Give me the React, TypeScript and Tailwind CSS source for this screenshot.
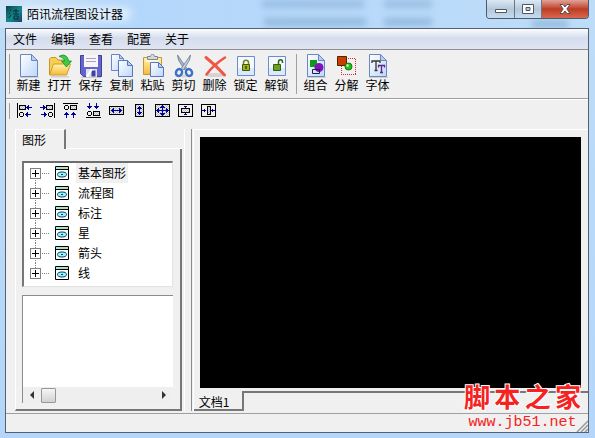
import type { ReactNode } from "react";

const menus = ["文件", "编辑", "查看", "配置", "关于"];
const shapes = ["基本图形", "流程图", "标注", "星", "箭头", "线"];

function Icon({ children }: { children?: ReactNode }) {
  return (
    <svg viewBox="0 0 24 24" className="h-6 w-6" aria-hidden="true">
      {children}
    </svg>
  );
}

function Defs() {
  return (
    <svg className="absolute h-0 w-0" aria-hidden="true">
      <defs>
        <linearGradient id="paper" x1="0" y1="0" x2="1" y2="1">
          <stop offset="0" stopColor="#ffffff" />
          <stop offset="1" stopColor="#bdd6fb" />
        </linearGradient>
        <linearGradient id="folder" x1="0" y1="0" x2="0" y2="1">
          <stop offset="0" stopColor="#fff6a8" />
          <stop offset="1" stopColor="#f5b93c" />
        </linearGradient>
        <linearGradient id="logo" x1="0" y1="0" x2="1" y2="1">
          <stop offset="0" stopColor="#0b3f4c" />
          <stop offset="0.55" stopColor="#138a8c" />
          <stop offset="1" stopColor="#1c3c66" />
        </linearGradient>
        <pattern id="hatch" width="2" height="2" patternUnits="userSpaceOnUse">
          <path d="M0 0h2v2H0z" fill="#f0f0f0" />
          <path d="M0 0h1v1H0zM1 1h1v1H1z" fill="#bdbdbd" />
        </pattern>
      </defs>
    </svg>
  );
}

const PAGE = "M3.5 .5h11l6 6v16h-17z";
const FOLD = "M14.5 .5v6h6z";

const Page = () => (
  <>
    <path d="M3 23.3h19" stroke="#c9c9c9" />
    <path d={PAGE} fill="url(#paper)" stroke="#6a87c4" />
    <path d={FOLD} fill="#b9cdf0" stroke="#6a87c4" />
  </>
);

const NewIcon = () => (
  <Icon>
    <Page />
  </Icon>
);

const OpenIcon = () => (
  <Icon>
    <path d="M3 22.8h18" stroke="#c4c4c4" />
    <path d="M1.500 20.500V5L3 3.500h5l2 2.500h8v5" fill="#f7cf55" stroke="#c9922a" />
    <path d="M1.500 21l4-11h17l-4 11z" fill="url(#folder)" stroke="#d39a2c" />
    <path d="M11 2.500c4-3 9-1 9.500 4.500h3l-5 6-5-6h3c0-2.500-2.500-4-5.500-4.500z" fill="#43c943" stroke="#168a27" strokeWidth=".8" />
  </Icon>
);

const SaveIcon = () => (
  <Icon>
    <path d="M2 23.3h20" stroke="#c4c4c4" />
    <path d="M1.500 1.500h21v21H4.500l-3-3z" fill="#6464cc" stroke="#3d3f9d" />
    <path d="M5 1h14v12H5z" fill="#f7f4fa" />
    <path d="M7 4.500h10M7 7.500h10" stroke="#a9a3b5" />
    <path d="M7 15h11v8H7z" fill="#dfe2ee" />
    <path d="M12.500 16.500h4v6h-4z" fill="#3f41a5" />
    <path d="M7 22l5-7h2l-5 8z" fill="#fff" />
  </Icon>
);

const CopyIcon = () => (
  <Icon>
    <path d="M1.500 .5h8l4 4v12h-12z" fill="url(#paper)" stroke="#6a87c4" />
    <path d="M9.500 .5v4h4z" fill="#b9cdf0" stroke="#6a87c4" />
    <path d="M8.500 6.500h9l5 5v11h-14z" fill="url(#paper)" stroke="#5578c0" />
    <path d="M17.500 6.500v5h5z" fill="#b9cdf0" stroke="#5578c0" />
  </Icon>
);

const PasteIcon = () => (
  <Icon>
    <path d="M2.500 3.500h18v17h-18z" fill="url(#folder)" stroke="#c59537" />
    <path d="M5 5.500h13V8H5z" fill="#fdf8dd" />
    <path d="M6.500 5.500v-3h3c0-3 4-3 4 0h3v3z" fill="#d5d9df" stroke="#7c8796" />
    <path d="M9.500 8.500h8l5 5v9h-13z" fill="url(#paper)" stroke="#5578c0" />
    <path d="M17.500 8.500v5h5z" fill="#b9cdf0" stroke="#5578c0" />
  </Icon>
);

const CutIcon = () => (
  <Icon>
    <ellipse cx="12" cy="22" rx="9" ry="1.500" fill="#d6d6d6" />
    <path d="M5.500 1l1 5 6 10 2-2z" fill="#a9b7ca" stroke="#65778f" strokeWidth=".8" />
    <path d="M18.500 1l-1 5-6 10-2-2z" fill="#c5d0df" stroke="#65778f" strokeWidth=".8" />
    <ellipse cx="7" cy="18.500" rx="3" ry="3.500" fill="none" stroke="#3b70c4" strokeWidth="2.400" transform="rotate(25 7 18.500)" />
    <ellipse cx="17" cy="18.500" rx="3" ry="3.500" fill="none" stroke="#3b70c4" strokeWidth="2.400" transform="rotate(-25 17 18.500)" />
  </Icon>
);

const DeleteIcon = () => (
  <Icon>
    <ellipse cx="12" cy="21" rx="10" ry="2" fill="#d6d2d2" />
    <path d="M3 3.500c5 4 12 10 18.500 17.500" stroke="#ee5646" strokeWidth="3" strokeLinecap="round" fill="none" />
    <path d="M22 3.500C15 8 8 14 3.500 20.500" stroke="#ee5646" strokeWidth="2.600" strokeLinecap="round" fill="none" />
  </Icon>
);

const LockIcon = ({ open = false }: { open?: boolean }) => (
  <Icon>
    <path d="M3.500 2.500h17v19h-17z" fill="#f5f9ff" stroke="#6a8cd0" />
    <path d="M4 14h16v7H4z" fill="#dce9fb" />
    <path
      d={open ? "M13.500 10V8c0-3 4-3 4 0v1" : "M9.500 10V8.500c0-3 5-3 5 0V10"}
      fill="none"
      stroke={open ? "#2f6b1b" : "#72851c"}
      strokeWidth="1.500"
    />
    <path d="M8.500 10.500h7v6h-7z" fill={open ? "#63a51d" : "#a2b617"} stroke="#405910" />
    {!open && <path d="M12 12v3" stroke="#334400" strokeWidth="1.500" />}
  </Icon>
);

const GroupIcon = () => (
  <Icon>
    <Page />
    <path d="M6 6h7v7H6z" fill="#0c9a17" />
    <circle cx="15" cy="13.500" r="4.500" fill="#8213bb" />
    <path d="M8.500 15.500h7v4h-7z" fill="none" stroke="#17224b" />
  </Icon>
);

const SplitIcon = () => (
  <Icon>
    <path d="M6.500 4.500h14v16h-14z" fill="none" stroke="#d02c2c" strokeDasharray="1 1" shapeRendering="crispEdges" />
    <path d="M2.500 2.500h9v9h-9z" fill="#c64100" stroke="#5d1d00" />
    <circle cx="13.500" cy="12.500" r="3.500" fill="#26c11c" stroke="#107710" />
    <circle cx="12.500" cy="11.500" r="1.200" fill="#c5ffb5" />
  </Icon>
);

const FontIcon = () => (
  <Icon>
    <Page />
    <path d="M6 9V7h8v2M10 7v9M8.500 16.500h3" stroke="#3a352f" strokeWidth="1.300" fill="none" />
    <path d="M12.500 13.500v-2h6v2M15.500 12v6M14 18.500h3" stroke="#5a2684" strokeWidth="1.300" fill="none" />
  </Icon>
);

const tools: { label: string; icon: ReactNode }[] = [
  { label: "新建", icon: <NewIcon /> },
  { label: "打开", icon: <OpenIcon /> },
  { label: "保存", icon: <SaveIcon /> },
  { label: "复制", icon: <CopyIcon /> },
  { label: "粘贴", icon: <PasteIcon /> },
  { label: "剪切", icon: <CutIcon /> },
  { label: "删除", icon: <DeleteIcon /> },
  { label: "锁定", icon: <LockIcon /> },
  { label: "解锁", icon: <LockIcon open /> },
];

const groupTools: { label: string; icon: ReactNode }[] = [
  { label: "组合", icon: <GroupIcon /> },
  { label: "分解", icon: <SplitIcon /> },
  { label: "字体", icon: <FontIcon /> },
];

const ink = { fill: "none", stroke: "#000" };
const box = { fill: "url(#hatch)", stroke: "#000" };
const blue = { fill: "#00009c" };
const LEFT = "M0 0h1v-1h1v-1h1v2h3v1H3v2H2V2H1V1H0z";
const RIGHT = "M6 0H5v-1H4v-1H3v2H0v1h3v2h1V2h1V1h1z";
const UP = "M0 0v-1h-1v-1h-1v-1H-3v1H-4v1H-5v1h2v3h1V0z";

const alignTools: { label: string; art: ReactNode }[] = [
  {
    label: "左对齐",
    art: (
      <>
        <path d="M.5 0v15" {...ink} />
        <path d="M2.500 2.500h6v4h-6z" {...box} />
        <circle cx="4.500" cy="11.500" r="2" {...ink} />
        <path d={LEFT} transform="translate(9 4)" {...blue} />
        <path d={LEFT} transform="translate(8 11)" {...blue} />
      </>
    ),
  },
  {
    label: "右对齐",
    art: (
      <>
        <path d="M14.500 0v15" {...ink} />
        <path d="M6.500 2.500h6v4h-6z" {...box} />
        <circle cx="10.500" cy="11.500" r="2" {...ink} />
        <path d={RIGHT} transform="translate(0 4)" {...blue} />
        <path d={RIGHT} transform="translate(1 11)" {...blue} />
      </>
    ),
  },
  {
    label: "顶端对齐",
    art: (
      <>
        <path d="M0 .5h15" {...ink} />
        <path d="M7.500 2.500h6v4h-6z" {...box} />
        <circle cx="3.500" cy="4.500" r="2" {...ink} />
        <path d={UP} transform="translate(6 12)" {...blue} />
        <path d={UP} transform="translate(13 12)" {...blue} />
      </>
    ),
  },
  {
    label: "底端对齐",
    art: (
      <>
        <path d="M0 14.500h15" {...ink} />
        <path d="M7.500 8.500h6v4h-6z" {...box} />
        <circle cx="3.500" cy="10.500" r="2" {...ink} />
        <path d={UP} transform="translate(6 3) scale(1 -1)" {...blue} />
        <path d={UP} transform="translate(13 3) scale(1 -1)" {...blue} />
      </>
    ),
  },
  {
    label: "等宽",
    art: (
      <>
        <path d="M.5 3.500h14v8H.5z" {...box} />
        <path d={LEFT} transform="translate(2 7)" {...blue} />
        <path d={RIGHT} transform="translate(7 7)" {...blue} />
      </>
    ),
  },
  {
    label: "等高",
    art: (
      <>
        <path d="M3.500 1.500h8v12h-8z" {...box} />
        <path d="M7 3h1v1h1v1h1v1H8v3h2v1H9v1H8v1H7v-1H6v-1H5V9h2V6H5V5h1V4h1z" {...blue} />
      </>
    ),
  },
  {
    label: "等大小",
    art: (
      <>
        <path d="M.5 1.500h14v12H.5z" {...box} />
        <path d="M7 2h1v1h1v1h1v1H8v2h3V5h1v1h1v1h1v1h-1v1h-1v1h-1V8H8v2h2v1H9v1H8v1H7v-1H6v-1H5v-1h2V8H4v2H3V9H2V8H1V7h1V6h1V5h1v2h3V5H5V4h1V3h1z" {...blue} />
      </>
    ),
  },
  {
    label: "垂直居中",
    art: (
      <>
        <path d="M.5 1.500h14v12H.5z" {...ink} />
        <path d="M3.500 5.500h8v4h-8z" {...box} />
        <path d="M6 3h3v1H8v1H7V4H6zM7 10h1v1h1v1H6v-1h1z" {...blue} />
      </>
    ),
  },
  {
    label: "水平居中",
    art: (
      <>
        <path d="M.5 1.500h14v12H.5z" {...ink} />
        <path d="M6.500 3.500h3v8h-3z" {...box} />
        <path d="M1 7h2V6h1v1h1v1H4v1H3V8H1zM14 7h-2V6h-1v1h-1v1h1v1h1V8h2z" {...blue} />
      </>
    ),
  },
];

function ToolButton({ label, icon }: { label: string; icon: ReactNode }) {
  return (
    <button className="flex w-[31px] flex-col items-center whitespace-nowrap">
      {icon}
      <span className="leading-[14px]">{label}</span>
    </button>
  );
}

function TitleBar() {
  return (
    <header className="relative flex h-7 shrink-0 items-start justify-between overflow-hidden bg-gradient-to-r from-[#cfe3f7] via-[#b3d7fb] via-20% to-[#bddcf8]">
      <div className="absolute top-0 left-[262px] h-2 w-[102px] bg-[#7da6cd]/50 blur-[3px]" />
      <div className="absolute top-[18px] left-[264px] h-2 w-[102px] bg-[#7da6cd]/60 blur-[3px]" />
      <div className="absolute top-0 left-[384px] h-2 w-12 bg-[#7da6cd]/50 blur-[3px]" />
      <div className="absolute top-[18px] left-[384px] h-2 w-12 bg-[#7da6cd]/60 blur-[3px]" />
      <div className="absolute top-[20px] left-[532px] h-2 w-9 bg-[#7da6cd]/60 blur-[3px]" />
      <div className="absolute top-2 left-[20px] h-3 w-[110px] bg-white/70 blur-[5px]" />
      <div className="relative flex h-7 items-center gap-[5px] pl-[6px]">
        <svg viewBox="0 0 16 16" className="h-4 w-4" aria-hidden="true">
          <path d="M0 0h16v16H0z" fill="url(#logo)" />
          <path d="M4 4l1 1M3 7l1 1M3 12l2-3M7 5h6M10 3v5M7 8h6M8 10h4v3H8z" stroke="#062c36" fill="none" />
        </svg>
        <h1 className="text-xs leading-4">陌讯流程图设计器</h1>
      </div>
      <div className="relative mr-[6px] flex h-[19px] overflow-hidden rounded-b-[4px] border border-t-0 border-[#4b5b6c]">
        <button aria-label="最小化" className="flex w-7 items-center justify-center border-r border-[#66788c] bg-gradient-to-b from-[#dce9f5] via-[#b5c8da] via-50% to-[#c5dbef]">
          <svg viewBox="0 0 12 12" className="h-3 w-3">
            <path d="M.5 6.500h11v3H.5z" fill="#fff" stroke="#505865" />
          </svg>
        </button>
        <button aria-label="最大化" className="flex w-[27px] items-center justify-center border-r border-[#66788c] bg-gradient-to-b from-[#dce9f5] via-[#b5c8da] via-50% to-[#c5dbef]">
          <svg viewBox="0 0 12 12" className="h-3 w-3">
            <path d="M.5 1.500h11v9H.5zM4 4.500h4v3H4z" fill="#fff" stroke="#505865" fillRule="evenodd" />
          </svg>
        </button>
        <button aria-label="关闭" className="flex w-[46px] items-center justify-center bg-gradient-to-b from-[#e0a297] via-[#bd3b24] via-50% to-[#d8684d]">
          <svg viewBox="0 0 12 12" className="h-3 w-3">
            <path d="M1 1.500h3l2 2.500 2-2.500h3L7.800 6l3.200 4.500H8L6 8l-2 2.500H1L4.200 6z" fill="#fff" stroke="#55434b" strokeWidth=".9" />
          </svg>
        </button>
      </div>
    </header>
  );
}

function ShapeTree() {
  return (
    <ul className="h-[126px] overflow-hidden border-t-2 border-l-2 border-r border-b border-t-[#6e6e6e] border-l-[#777777] border-r-[#e3e3e3] border-b-[#e3e3e3] bg-white">
      {shapes.map((name, i) => (
        <li key={name} className="flex h-5 items-center pl-[6px]">
          <svg viewBox="0 0 20 20" className="h-5 w-5" aria-hidden="true" shapeRendering="crispEdges">
            <path
              d={i === 0 ? "M5.500 15v5" : i === shapes.length - 1 ? "M5.500 0v5" : "M5.500 0v5M5.500 15v5"}
              stroke="#808080"
              strokeDasharray="1 1"
            />
            <path d="M12 10.500h8" stroke="#808080" strokeDasharray="1 1" />
            <path d="M.5 5.500h10v10H.5z" fill="#fff" stroke="#808080" />
            <path d="M2 10.500h7M5.500 7v7" stroke="#000" />
          </svg>
          <svg viewBox="0 0 14 14" className="ml-[5px] h-[14px] w-[14px]" aria-hidden="true">
            <path d="M.5 .5h13v13H.5z" fill="#fff" stroke="#000" />
            <path d="M1 1h3v2H1z" fill="#7ff" />
            <path d="M4 1h9v2H4z" fill="#b5dcb5" />
            <path d="M0 3.500h14" stroke="#000" />
            <ellipse cx="7" cy="8.500" rx="4.500" ry="2.500" fill="#8ff5ff" stroke="#123a5c" />
            <path d="M6 8.500h2" stroke="#123a5c" />
          </svg>
          <button className={i === 0 ? "ml-[7px] h-5 bg-[#f0f0f0] px-[2px]" : "ml-[7px] h-5 px-[2px]"}>{name}</button>
        </li>
      ))}
    </ul>
  );
}

function Sidebar() {
  return (
    <aside className="flex w-[167px] shrink-0 flex-col">
      <div className="flex h-5">
        <button className="w-[51px] border-t border-r-2 border-l border-t-white border-r-[#777777] border-l-white pr-3 leading-4">
          图形
        </button>
        <div className="flex-1 border-b border-white" />
      </div>
      <div className="flex flex-1 flex-col gap-2 border-r-2 border-b-2 border-l border-r-[#777777] border-b-[#777777] border-l-white pt-3 pr-[7px] pb-[6px] pl-[6px]">
        <ShapeTree />
        <div className="flex flex-1 flex-col border-t border-l border-[#8c8c8c] bg-white">
          <div className="flex-1" />
          <div className="flex h-4 items-center bg-[#efefef]">
            <button aria-label="向左滚动" className="flex h-4 w-[18px] items-center justify-center">
              <svg viewBox="0 0 4 8" className="h-2 w-1"><path d="M4 0v8L0 4z" fill="#333" /></svg>
            </button>
            <div className="h-[15px] w-[15px] rounded-[1px] border border-[#979797] bg-gradient-to-b from-[#f5f5f5] to-[#d2d2d2]" />
            <div className="flex-1" />
            <button aria-label="向右滚动" className="flex h-4 w-[18px] items-center justify-center">
              <svg viewBox="0 0 4 8" className="h-2 w-1"><path d="M0 0v8l4-4z" fill="#333" /></svg>
            </button>
          </div>
        </div>
      </div>
    </aside>
  );
}

export default function App() {
  return (
    <div className="relative flex min-h-screen flex-col bg-gradient-to-b from-[#bddcf8] to-[#b3d6fa] font-['Noto_Sans_CJK_SC',sans-serif] text-xs text-black">
      <Defs />
      <TitleBar />
      <div className="mr-[6px] mb-[5px] ml-[5px] flex flex-1 flex-col border border-[#56606e] bg-[#f0f0f0]">
        <nav className="flex h-5 items-center gap-[14px] bg-gradient-to-b from-[#fbfcfe] via-[#d5dcec] via-45% to-[#e0e5f3] pl-[7px]">
          {menus.map((m) => (
            <button key={m} className="leading-4">{m}</button>
          ))}
        </nav>
        <div className="flex h-[49px] items-start border-t border-[#8f8f8f] pt-1 pl-[3px]">
          <div className="mr-[3px] h-10 w-px bg-[#a0a0a0]" />
          {tools.map((t) => (
            <ToolButton key={t.label} label={t.label} icon={t.icon} />
          ))}
          <div className="mr-[3px] ml-1 h-10 w-px bg-[#a0a0a0]" />
          {groupTools.map((t) => (
            <ToolButton key={t.label} label={t.label} icon={t.icon} />
          ))}
        </div>
        <div className="flex h-[31px] items-start border-t border-[#a0a0a0] pt-1 pl-[3px] shadow-[inset_0_1px_0_#fff]">
          <div className="mr-[3px] h-4 w-px bg-[#a0a0a0]" />
          {alignTools.map((t) => (
            <button key={t.label} aria-label={t.label} className="flex w-[23px] justify-center">
              <svg viewBox="0 0 15 15" className="h-[15px] w-[15px]" shapeRendering="crispEdges" aria-hidden="true">
                {t.art}
              </svg>
            </button>
          ))}
        </div>
        <main className="flex flex-1 pl-[9px]">
          <Sidebar />
          <div className="ml-[2px] w-2 border-r border-l border-r-[#8c8c8c] border-l-white" />
          <section className="ml-[1px] flex flex-1 flex-col border-l border-white">
            <div className="flex flex-1 border-t border-white pt-[7px] pr-[7px] pl-[6px]">
              <div className="flex-1 bg-black" />
            </div>
            <div className="flex h-[23px] pt-[3px]">
              <button className="w-[50px] border-r-2 border-b-2 border-[#777777] pt-1 pr-2 leading-[14px]">文档1</button>
              <div className="h-0 flex-1 border-t-2 border-[#777777]" />
            </div>
          </section>
        </main>
        <footer className="mt-[2px] flex h-[19px] items-end justify-end border-t border-[#a0a0a0] bg-[#f0f0f0]">
          <svg viewBox="0 0 12 12" className="h-3 w-3" aria-hidden="true">
            <path d="M1 12L12 1M5 12l7-7M9 12l3-3" stroke="#999" strokeWidth="1.500" />
          </svg>
        </footer>
      </div>
      <div className="absolute right-[14px] bottom-[7px] flex w-[117px] flex-col items-center text-[#f52222]">
        <div className="flex w-full justify-between font-['Liberation_Serif','Noto_Sans_CJK_SC',serif] text-[26px] leading-[30px] font-bold [paint-order:stroke_fill] [-webkit-text-stroke:2px_white]">
          {["脚", "本", "之", "家"].map((c) => (
            <span key={c}>{c}</span>
          ))}
        </div>
        <span className="font-['Liberation_Mono',monospace] text-[15px] leading-[17px]">www.jb51.net</span>
      </div>
    </div>
  );
}
